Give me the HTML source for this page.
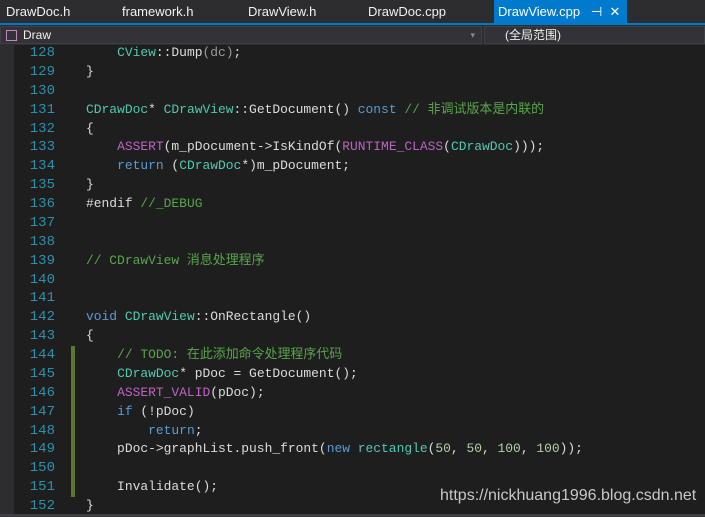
<!DOCTYPE html>
<html><head><meta charset="utf-8"><style>
*{margin:0;padding:0;box-sizing:border-box}
body{width:705px;height:517px;background:#1e1e1e;overflow:hidden;position:relative;font-family:"Liberation Sans","Noto Sans CJK SC",sans-serif}
.tabs{position:absolute;left:0;top:0;width:705px;height:23px;background:#2d2d30}
.tab{position:absolute;top:4px;font-size:13px;color:#f1f1f1;line-height:16px}
.act{position:absolute;left:494px;top:0;width:133px;height:23px;background:#007acc}
.bl{position:absolute;left:0;top:23px;width:705px;height:2px;background:#007acc}
.bar{position:absolute;left:0;top:25px;width:705px;height:20px;background:#2d2d30}
.box{position:absolute;top:26px;height:18px;background:#333337;border:1px solid #3f3f46;font-size:12px;line-height:15px;color:#f1f1f1;padding:1px 0 0 22px}
.strip{position:absolute;left:0;top:45px;width:14px;height:472px;background:#2d2d30}
.ln{position:absolute;left:14px;width:41px;text-align:right;color:#2b91af;font-family:"Liberation Mono",monospace;font-size:14px;line-height:18px}
.c{position:absolute;left:86px;white-space:pre;color:#dcdcdc;font-family:"Liberation Mono","Noto Sans CJK SC",monospace;font-size:12.95px;line-height:18px}
.k{color:#569cd6}.t{color:#4ec9b0}.m{color:#bd63c5}.g{color:#57a64a}.n{color:#b5cea8}.p{color:#9b9b9b}
.chg{position:absolute;left:71px;width:4px;background:#5a7a2a}
.wm{position:absolute;left:440px;top:487px;color:#c8c8c8;font-size:16px;line-height:18px}
</style></head><body>
<div class="tabs">
<span class="tab" style="left:6px">DrawDoc.h</span>
<span class="tab" style="left:122px">framework.h</span>
<span class="tab" style="left:248px">DrawView.h</span>
<span class="tab" style="left:368px">DrawDoc.cpp</span>
<div class="act"></div>
<span class="tab" style="left:498px;color:#fff">DrawView.cpp&nbsp;&nbsp;&nbsp;⊣&nbsp;&nbsp;✕</span>
</div>
<div class="bl"></div>
<div class="bar"></div>
<div class="box" style="left:0;width:482px">Draw<span style="position:absolute;left:5px;top:3px;width:11px;height:11px;border:1px solid #c586c0"></span><span style="position:absolute;right:6px;top:1px;color:#888;font-size:9px">▾</span></div>
<div class="box" style="left:484px;width:221px;padding-left:20px">(全局范围)</div>
<div class="strip"></div>
<div class="chg" style="top:346px;height:151px"></div>
<div id="code"></div>
<script>
var L=[
'    <span class="t">CView</span>::Dump<span class="p">(dc)</span>;',
'}','',
'<span class="t">CDrawDoc</span>* <span class="t">CDrawView</span>::GetDocument() <span class="k">const</span> <span class="g">// 非调试版本是内联的</span>',
'{',
'    <span class="m">ASSERT</span>(m_pDocument-&gt;IsKindOf(<span class="m">RUNTIME_CLASS</span>(<span class="t">CDrawDoc</span>)));',
'    <span class="k">return</span> (<span class="t">CDrawDoc</span>*)m_pDocument;',
'}',
'#endif <span class="g">//_DEBUG</span>',
'','',
'<span class="g">// CDrawView 消息处理程序</span>',
'','',
'<span class="k">void</span> <span class="t">CDrawView</span>::OnRectangle()',
'{',
'    <span class="g">// TODO: 在此添加命令处理程序代码</span>',
'    <span class="t">CDrawDoc</span>* pDoc = GetDocument();',
'    <span class="m">ASSERT_VALID</span>(pDoc);',
'    <span class="k">if</span> (!pDoc)',
'        <span class="k">return</span>;',
'    pDoc-&gt;graphList.push_front(<span class="k">new</span> <span class="t">rectangle</span>(<span class="n">50</span>, <span class="n">50</span>, <span class="n">100</span>, <span class="n">100</span>));',
'',
'    Invalidate();',
'}'];
var h='';
for(var i=0;i<L.length;i++){var y=44+i*18.875;
h+='<div class="ln" style="top:'+y+'px">'+(128+i)+'</div><div class="c" style="top:'+y+'px">'+L[i]+'</div>';}
document.getElementById('code').innerHTML=h;
</script>
<div class="wm">https://nickhuang1996.blog.csdn.net</div>
<div style="position:absolute;left:0;top:514px;width:705px;height:3px;background:#3e3e42"></div>
</body></html>
